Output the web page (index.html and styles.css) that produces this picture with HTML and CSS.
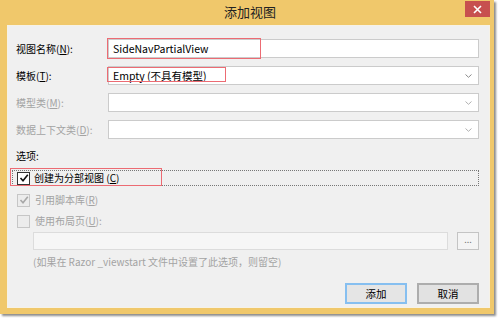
FILE: index.html
```html
<html>
<head>
<title>添加视图</title>
<link rel="stylesheet" href="styles.css">
</head>
<body>

<div class="window">
	<div class="titlebar">
		<span></span>
		<span class="title">添加视图</span>
		<span class="close">
			<svg width="9" height="9" viewBox="0 0 9 9"><path d="M1 1L8 8M8 1L1 8" stroke="#fff" stroke-width="1.6"/></svg>
		</span>
	</div>
	<div class="panel">
		<div class="form">
			<label>视图名称(<u>N</u>):</label>
			<div class="field"><span>SideNavPartialView</span></div>
			<label>模板(<u>T</u>):</label>
			<div class="field select">
				<span>Empty (不具有模型)</span>
				<svg width="7" height="4" viewBox="0 0 7 4"><path d="M0.5 0.5L3.5 3.3L6.5 0.5" fill="none" stroke="#8a8a8a"/></svg>
			</div>
			<label class="off">模型类(<u>M</u>):</label>
			<div class="field select">
				<span></span>
				<svg width="7" height="4" viewBox="0 0 7 4"><path d="M0.5 0.5L3.5 3.3L6.5 0.5" fill="none" stroke="#b0b0b0"/></svg>
			</div>
			<label class="off">数据上下文类(<u>D</u>):</label>
			<div class="field select">
				<span></span>
				<svg width="7" height="4" viewBox="0 0 7 4"><path d="M0.5 0.5L3.5 3.3L6.5 0.5" fill="none" stroke="#b0b0b0"/></svg>
			</div>
		</div>

		<div class="section">选项:</div>

		<div class="check focus">
			<span class="box">
				<svg width="10" height="10" viewBox="0 0 10 10"><path d="M1.5 5L4 7.8L8.8 1.8" fill="none" stroke="#111" stroke-width="1.6"/></svg>
			</span>
			创建为分部视图 (<u>C</u>)
		</div>
		<div class="check off">
			<span class="box">
				<svg width="10" height="10" viewBox="0 0 10 10"><path d="M1.5 5L4 7.8L8.8 1.8" fill="none" stroke="#a8a8a8" stroke-width="1.6"/></svg>
			</span>
			引用脚本库(<u>R</u>)
		</div>
		<div class="check off">
			<span class="box"></span>
			使用布局页(<u>U</u>):
		</div>

		<div class="layout-row">
			<div class="field dim"></div>
			<div class="browse">...</div>
		</div>
		<div class="hint">(如果在 Razor _viewstart 文件中设置了此选项，则留空)</div>

		<div class="buttons">
			<div class="btn default">添加</div>
			<div class="btn">取消</div>
		</div>

		<div class="mark mark-name"></div>
		<div class="mark mark-template"></div>
		<div class="mark mark-partial"></div>
	</div>
</div>

</body>
</html>
```

FILE: styles.css
```css
body {
	margin: 0;
	background: #fff;
	font-family: "Noto Sans CJK SC", "Noto Sans", sans-serif;
	font-size: 10px;
	color: #000;
}
.window {
	width: 494px;
	height: 314px;
	background-color: #f0c86b;
	box-shadow: 2px 2px 2px rgba(0, 0, 0, 0.45);
	display: flex;
	flex-direction: column;
}
.titlebar {
	height: 25px;
	display: grid;
	grid-template-columns: 1fr auto 1fr;
}
.titlebar .title {
	font-size: 13px;
	line-height: 24px;
	color: #222;
	padding-left: 6px;
}
.titlebar .close {
	justify-self: end;
	width: 25px;
	height: 16px;
	margin: 1px 4px 0 0;
	background-color: #c7504f;
	display: flex;
	align-items: center;
	justify-content: center;
}
.panel {
	position: relative;
	flex: 1;
	margin: 0 4px 6px 7px;
	background-color: #f0f0f0;
	padding: 14px 11px 0 9px;
	box-shadow: inset 0 0 0 1px #f6f2e6;
}
.form {
	display: grid;
	grid-template-columns: 92px 1fr;
	grid-auto-rows: 19px;
	row-gap: 8px;
}
label {
	line-height: 19px;
}
.off {
	color: #a3a3a3;
}
.field {
	background: #fff;
	border: 1px solid #cbcbcb;
	display: flex;
	align-items: center;
	padding: 0 4px;
	font-size: 10.5px;
}
.field.select {
	justify-content: space-between;
	padding-right: 6px;
}
.field.dim {
	background: #f6f6f6;
	border-color: #dcdcdc;
}
.section {
	margin-top: 10px;
	line-height: 14px;
}
.check {
	display: flex;
	align-items: center;
	line-height: 14px;
	height: 14px;
	padding-left: 1px;
}
.check .box {
	width: 11px;
	height: 11px;
	border: 1px solid #333;
	background: #fff;
	margin-right: 4px;
	display: flex;
	align-items: center;
	justify-content: center;
}
.check.off {
	margin-top: 7px;
}
.check.off .box {
	border-color: #c6c6c6;
	background: #ececec;
	margin-right: 5px;
}
.check.focus {
	margin: 7px 0 0 -4px;
	padding-left: 4px;
	border: 1px dotted #777;
}
.layout-row {
	display: flex;
	height: 18px;
	margin: 4px 0 0 17px;
}
.layout-row .field {
	flex: 1;
}
.browse {
	width: 20px;
	margin-left: 9px;
	border: 1px solid #c4c4c4;
	background: #f4f4f4;
	color: #777;
	text-align: center;
	line-height: 14px;
	font-size: 9px;
}
.hint {
	margin: 5px 0 0 17px;
	line-height: 14px;
	color: #a3a3a3;
}
.buttons {
	display: flex;
	justify-content: flex-end;
	gap: 10px;
	margin-top: 14px;
}
.btn {
	width: 58px;
	height: 17px;
	border: 2px solid #adadad;
	background-color: #e2e2e2;
	text-align: center;
	line-height: 17px;
	font-size: 10.5px;
}
.btn.default {
	border-color: #86bff0;
	background-color: #e5e5e5;
}
.mark {
	position: absolute;
	border: 1.5px solid #ec6b73;
}
.mark-name {
	left: 100px;
	top: 13px;
	width: 152px;
	height: 19px;
}
.mark-template {
	left: 100px;
	top: 42px;
	width: 117px;
	height: 13px;
}
.mark-partial {
	left: 3px;
	top: 143px;
	width: 150px;
	height: 16px;
}
```
